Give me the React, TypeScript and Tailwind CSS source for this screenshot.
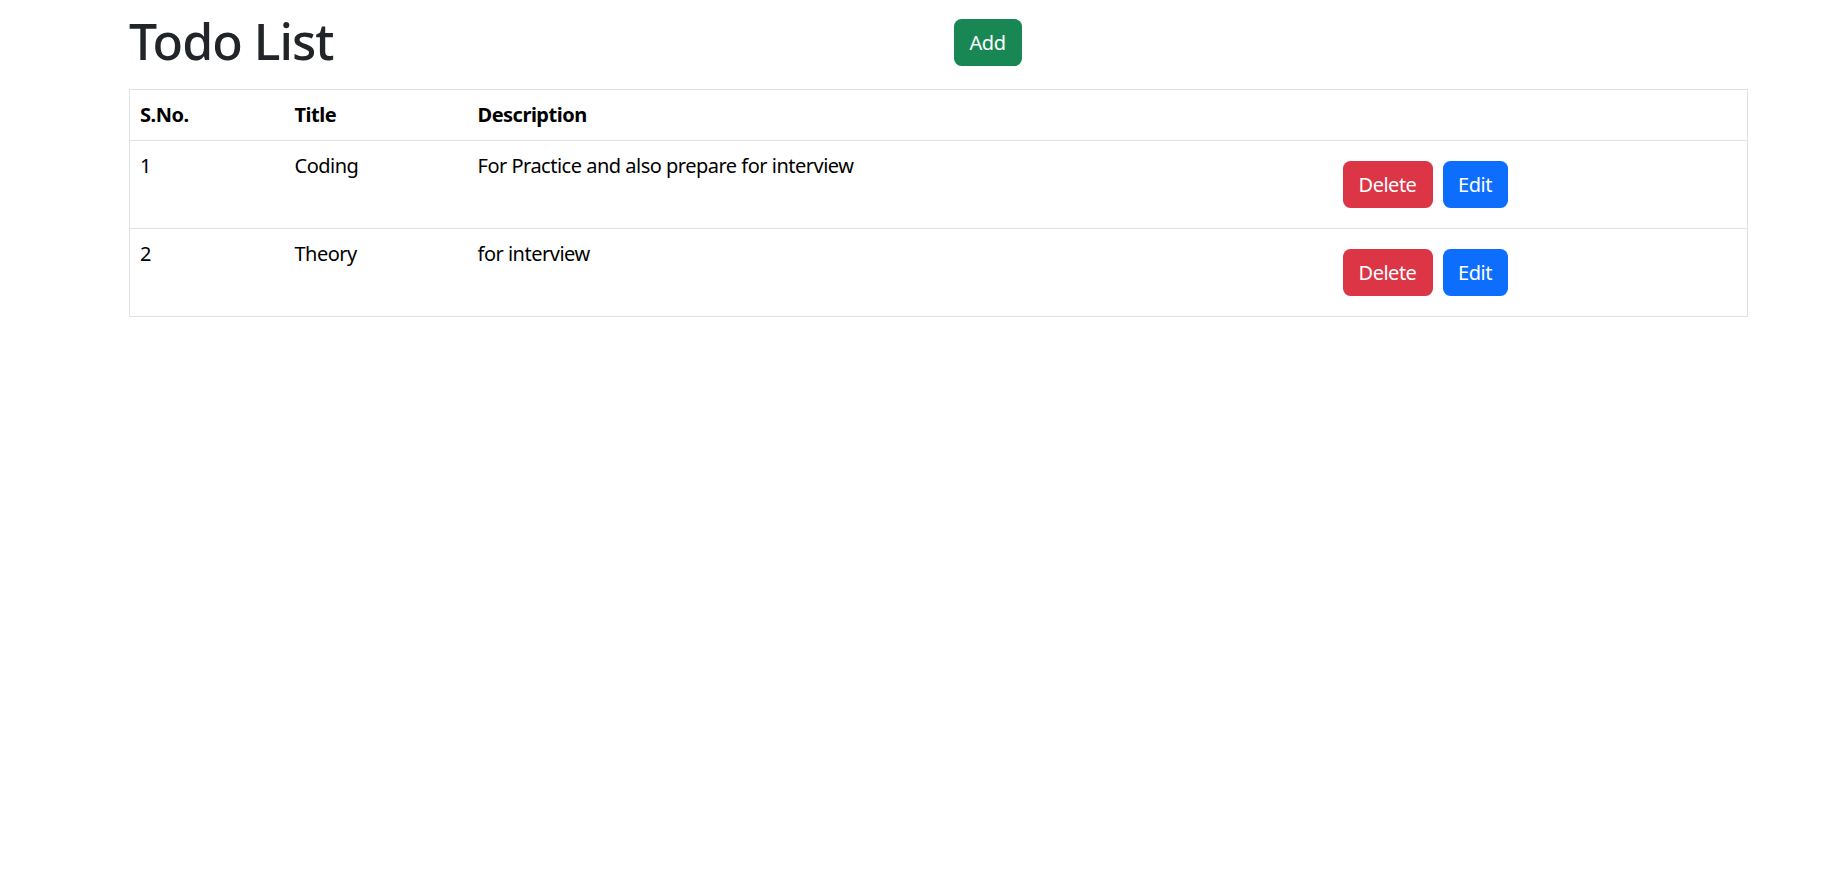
import { FC } from 'react';

type Todo = { sno: number; title: string; desc: string };

const todos: Todo[] = [
  { sno: 1, title: 'Coding', desc: 'For Practice and also prepare for interview' },
  { sno: 2, title: 'Theory', desc: 'for interview' },
];

const App: FC = () => {
  return (
    <div className="min-h-screen bg-white font-['Noto_Sans',sans-serif] text-[20px] tracking-[-0.5px] text-[#212529]">
      <div className="ml-[129px] mr-[88px]">
        <div className="grid h-[89px] grid-cols-2">
          <h1 className="pt-[11px] text-[50px] font-medium leading-[1.2] tracking-[-1px]">Todo List</h1>
          <div className="pl-[15px] pt-[19px]">
            <button className="h-[47px] w-[68px] rounded-[7.5px] bg-[#198754] text-white">Add</button>
          </div>
        </div>
        <table className="w-full border border-[#dee2e6] text-left text-black">
          <thead>
            <tr className="border-b border-[#dee2e6]">
              <th className="w-[155px] px-[10px] py-[10px] font-bold">S.No.</th>
              <th className="w-[183px] px-[10px] py-[10px] font-bold">Title</th>
              <th className="w-[860px] px-[10px] py-[10px] font-bold">Description</th>
              <th className="px-[10px] py-[10px]"></th>
            </tr>
          </thead>
          <tbody>
            {todos.map((t) => (
              <tr key={t.sno} className="border-b border-[#dee2e6] align-top">
                <td className="px-[10px] py-[10px]">{t.sno}</td>
                <td className="px-[10px] py-[10px]">{t.title}</td>
                <td className="px-[10px] py-[10px]">{t.desc}</td>
                <td className="px-[10px] py-[10px]">
                  <div className="flex gap-[10px] py-[10px] pl-[5px]">
                    <button className="h-[47px] w-[90px] rounded-[7.5px] bg-[#dc3545] text-white">Delete</button>
                    <button className="h-[47px] w-[65px] rounded-[7.5px] bg-[#0d6efd] text-white">Edit</button>
                  </div>
                </td>
              </tr>
            ))}
          </tbody>
        </table>
      </div>
    </div>
  );
};

export default App;
